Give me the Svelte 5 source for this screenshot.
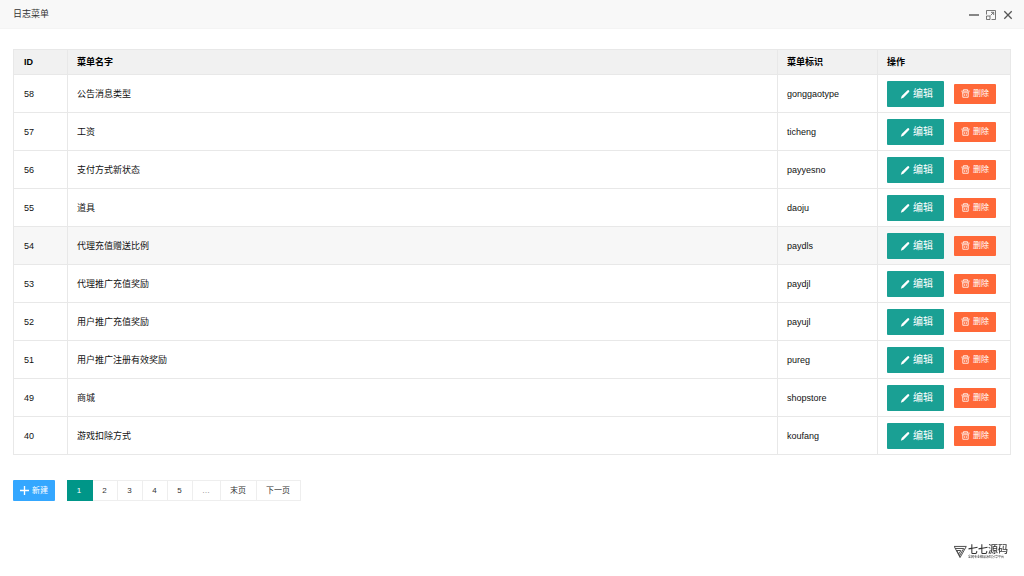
<script>
	let rows = [
		{ id: 58, name: '公告消息类型', key: 'gonggaotype' },
		{ id: 57, name: '工资', key: 'ticheng' },
		{ id: 56, name: '支付方式新状态', key: 'payyesno' },
		{ id: 55, name: '道具', key: 'daoju' },
		{ id: 54, name: '代理充值赠送比例', key: 'paydls' },
		{ id: 53, name: '代理推广充值奖励', key: 'paydjl' },
		{ id: 52, name: '用户推广充值奖励', key: 'payujl' },
		{ id: 51, name: '用户推广注册有效奖励', key: 'pureg' },
		{ id: 49, name: '商城', key: 'shopstore' },
		{ id: 40, name: '游戏扣除方式', key: 'koufang' }
	];

	let pages = ['2', '3', '4', '5'];
	let activeRow = $state(54);
</script>

<header class="title-bar">
	<h1>日志菜单</h1>
	<div class="window-tools">
		<button type="button" aria-label="最小化">
			<svg viewBox="0 0 10 10"><path d="M0 5h10" stroke-width="1.4" /></svg>
		</button>
		<button type="button" aria-label="最大化">
			<svg viewBox="0 0 10 10">
				<path d="M.5 4.5V.5h9v9h-4M.5 6h3.5v3.5H.5zM4.5 5.5l3-3M5 2.3h2.7V5" stroke-width=".8" />
			</svg>
		</button>
		<button type="button" aria-label="关闭">
			<svg viewBox="0 0 10 10"><path d="M1.3 1.3l7.4 7.4M8.7 1.3L1.3 8.7" stroke-width="1.3" /></svg>
		</button>
	</div>
</header>

<main>
	<table>
		<colgroup>
			<col class="col-id" />
			<col />
			<col class="col-key" />
			<col class="col-actions" />
		</colgroup>
		<thead>
			<tr>
				<th>ID</th>
				<th>菜单名字</th>
				<th>菜单标识</th>
				<th>操作</th>
			</tr>
		</thead>
		<tbody>
			{#each rows as row (row.id)}
				<tr class:active={row.id === activeRow} onmouseenter={() => (activeRow = row.id)}>
					<td>{row.id}</td>
					<td>{row.name}</td>
					<td>{row.key}</td>
					<td>
						<div class="actions">
							<button type="button" class="btn edit">
								<svg viewBox="0 0 10 10">
									<path d="M.8 9.8l.9-2.9 5.6-5.5q.9-.8 1.7 0t0 1.7L3.4 8.8z" fill="currentColor" />
								</svg>
								编辑
							</button>
							<button type="button" class="btn small delete">
								<svg viewBox="0 0 10 10">
									<path
										d="M.3 2.4h9.4M2.7 2.2V.8h4.6v1.4M2 4.2v5h6v-5M1 4.2h8M4 5.8v1.8M6 5.8v1.8"
										fill="none"
										stroke="currentColor"
										stroke-width=".9"
									/>
								</svg>
								删除
							</button>
						</div>
					</td>
				</tr>
			{/each}
		</tbody>
	</table>

	<div class="footer">
		<button type="button" class="btn small create">
			<svg viewBox="0 0 10 10">
				<path d="M5 0v10M0 5h10" fill="none" stroke="currentColor" stroke-width="1.5" />
			</svg>
			新建
		</button>
		<nav class="pager">
			<span class="current">1</span>
			{#each pages as page}
				<a href="#{page}">{page}</a>
			{/each}
			<span class="dots">…</span>
			<a href="#last">末页</a>
			<a href="#next">下一页</a>
		</nav>
	</div>
</main>

<div class="brand">
	<svg viewBox="0 0 14 14">
		<path
			d="M0 1h13.5M1.2 3.2h9.3M2.5 5.4h4.8M.5 1.5l6 11.5L13 1.5M3 5.5l3.5 6M10.5 3.2L6 11M7.5 5.4L5.2 9"
			fill="none"
			stroke="#444"
		/>
	</svg>
	<div>
		<strong>七七源码</strong>
		<small>全网专业精品源码分享平台</small>
	</div>
</div>

<style>
	:global(body) {
		margin: 0;
		background: #fff;
		color: #111;
		font-family: 'Liberation Sans', 'Noto Sans CJK SC', sans-serif;
		font-size: 9px;
		line-height: 16px;
	}

	.title-bar {
		display: flex;
		align-items: center;
		justify-content: space-between;
		height: 28px;
		padding: 0 11px 0 13px;
		background: #f8f8f8;
		border-bottom: 1px solid #f4f4f4;
	}

	h1 {
		margin: 0;
		font-size: 9px;
		font-weight: 400;
		color: #333;
	}

	.window-tools {
		display: flex;
		gap: 7px;
		padding-top: 2px;
	}

	.window-tools button {
		display: flex;
		padding: 0;
		border: 0;
		background: none;
		cursor: pointer;
	}

	.window-tools svg {
		width: 10px;
		height: 10px;
		fill: none;
		stroke: #555;
	}

	main {
		padding: 20px 13px;
	}

	table {
		width: 100%;
		table-layout: fixed;
		border-collapse: collapse;
	}

	.col-id {
		width: 54px;
	}

	.col-key {
		width: 100px;
	}

	.col-actions {
		width: 133px;
	}

	th,
	td {
		box-sizing: border-box;
		padding: 0 9px;
		border: 1px solid #e8e8e8;
		text-align: left;
	}

	th:first-child,
	td:first-child {
		padding-left: 10px;
	}

	th {
		height: 25px;
		background: #f1f1f1;
		color: #000;
		font-weight: 700;
	}

	td {
		height: 38px;
	}

	.active {
		background: #f7f7f7;
	}

	.actions {
		display: flex;
		align-items: center;
		gap: 10px;
	}

	.btn {
		display: flex;
		align-items: center;
		justify-content: center;
		gap: 3px;
		height: 26px;
		padding: 0 11px 0 13px;
		border: 0;
		border-radius: 1px;
		color: #fff;
		font-family: inherit;
		font-size: 10px;
		line-height: 16px;
		white-space: nowrap;
		cursor: pointer;
	}

	.btn svg {
		width: 10px;
		height: 10px;
	}

	.small {
		height: 20px;
		padding: 0 7px;
		font-size: 8px;
	}

	.small svg {
		width: 9px;
		height: 9px;
	}

	.edit {
		background: #1aa094;
	}

	.delete {
		background: #ff6838;
	}

	.create {
		height: 21px;
		background: #34a7ff;
	}

	.footer {
		display: flex;
		gap: 12px;
		margin-top: 25px;
	}

	.pager {
		display: flex;
		font-size: 8px;
		line-height: 19px;
	}

	.pager a,
	.pager span {
		box-sizing: border-box;
		min-width: 25px;
		padding: 0 10px 0 9px;
		border: 1px solid #eee;
		border-left-width: 0;
		color: #333;
		text-align: center;
		text-decoration: none;
	}

	.pager .current {
		min-width: 26px;
		border-color: #009688;
		background: #009688;
		color: #fff;
	}

	.pager .dots {
		color: #777;
	}

	.brand {
		position: fixed;
		right: 16px;
		bottom: 17px;
		display: flex;
		align-items: center;
		gap: 1px;
		color: #333;
	}

	.brand svg {
		width: 13px;
		height: 14px;
	}

	.brand strong,
	.brand small {
		display: block;
	}

	.brand strong {
		font-size: 10px;
		font-weight: 500;
		line-height: 11px;
	}

	.brand small {
		font-size: 3px;
		line-height: 4px;
	}
</style>
